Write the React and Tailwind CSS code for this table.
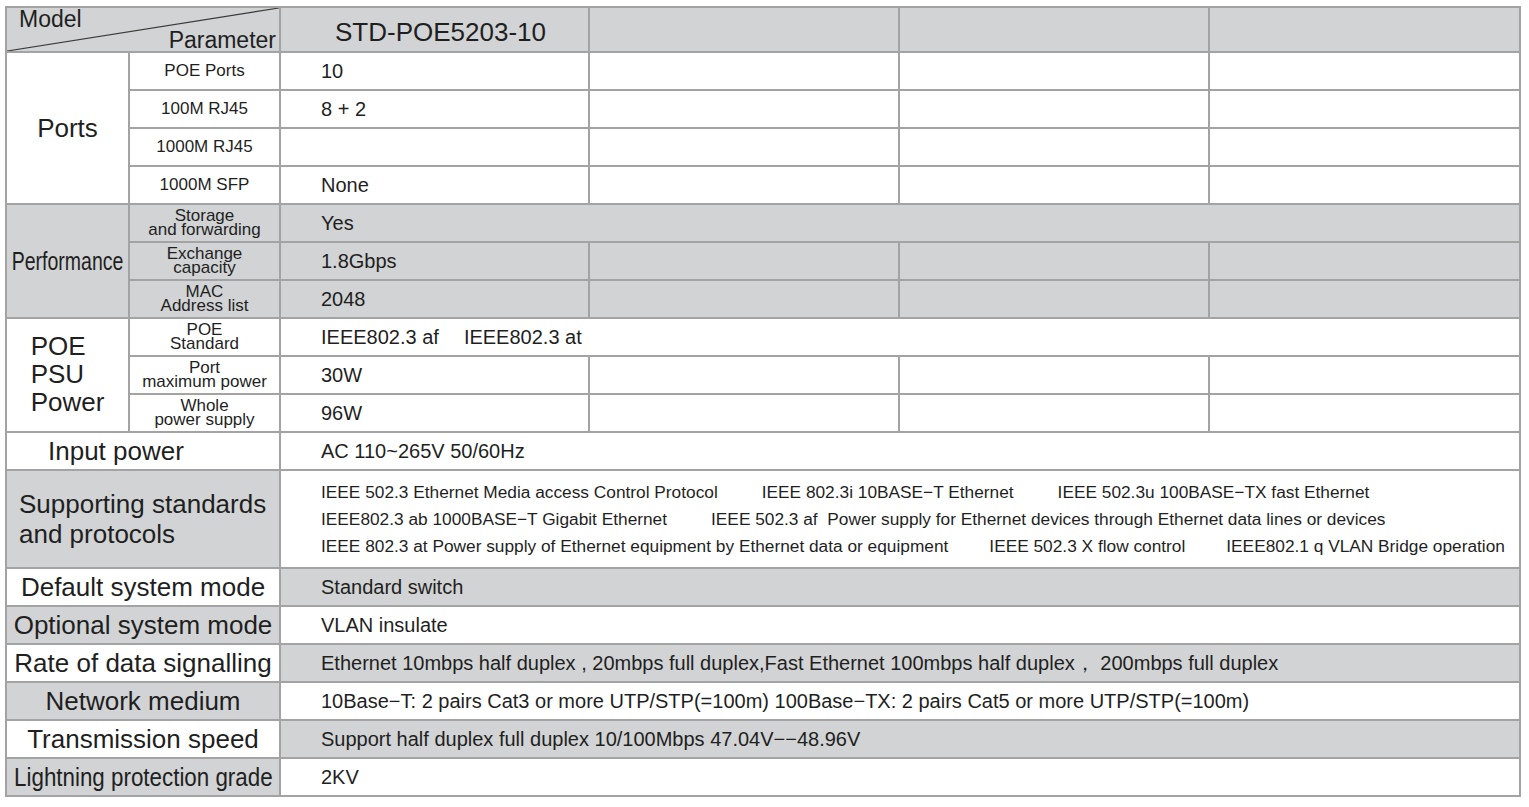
import React from 'react';

// colonnes : label groupe | sous-label | 4 colonnes de modèles
const GRAY = 'bg-[#d1d3d4]';
const cell = 'border-2 border-[#a3a3a3] p-0';

const Empty = ({ n = 3 }) =>
  Array.from({ length: n }).map((_, i) => <td key={i} className={cell}></td>);

const Sub = ({ children }) => (
  <td className={`${cell} text-center text-[17px] leading-[14px]`}>{children}</td>
);

const Val = ({ children, span = 1, className = '' }) => (
  <td colSpan={span} className={`${cell} pl-[40px] text-[20px] leading-[30px] whitespace-nowrap ${className}`}>
    {children}
  </td>
);

const standards = [
  [
    'IEEE 502.3 Ethernet Media access Control Protocol',
    'IEEE 802.3i 10BASE\u2212T Ethernet',
    'IEEE 502.3u 100BASE\u2212TX fast Ethernet',
  ],
  [
    'IEEE802.3 ab 1000BASE\u2212T Gigabit Ethernet',
    'IEEE 502.3 af  Power supply for Ethernet devices through Ethernet data lines or devices',
  ],
  [
    'IEEE 802.3 at Power supply of Ethernet equipment by Ethernet data or equipment',
    'IEEE 502.3 X flow control',
    'IEEE802.1 q VLAN Bridge operation',
  ],
];

// lignes simples du bas : [label, valeur, labelGris]
const bottomRows = [
  ['Default system mode', 'Standard switch', false],
  ['Optional system mode', 'VLAN insulate', true],
  ['Rate of data signalling', 'Ethernet 10mbps half duplex , 20mbps full duplex,Fast Ethernet 100mbps half duplex\uFF0C 200mbps full duplex', false],
  ['Network medium', '10Base\u2212T: 2 pairs Cat3 or more UTP/STP(=100m) 100Base\u2212TX: 2 pairs Cat5 or more UTP/STP(=100m)', true],
  ['Transmission speed', 'Support half duplex full duplex 10/100Mbps 47.04V\u2212\u221248.96V', false],
  ['Lightning protection grade', '2KV', true],
];

export default function App() {
  return (
    <div className="min-h-screen bg-white pt-[6px] pl-[5px] font-['Liberation_Sans',Arial,sans-serif] text-[#1f1f1f]">
      <table className="w-[1514px] table-fixed border-collapse">
        <colgroup>
          <col className="w-[123px]" />
          <col className="w-[151px]" />
          <col className="w-[309px]" />
          <col className="w-[310px]" />
          <col className="w-[310px]" />
          <col className="w-[311px]" />
        </colgroup>
        <tbody>
          {/* ========== EN-TÊTE ========== */}
          <tr className={`h-[45px] ${GRAY}`}>
            <td colSpan={2} className={`${cell} relative`}>
              <svg className="absolute inset-0 h-full w-full" preserveAspectRatio="none" viewBox="0 0 100 100">
                <line x1="0" y1="100" x2="100" y2="0" stroke="#3a3a3a" strokeWidth="1.2" vectorEffect="non-scaling-stroke" />
              </svg>
              <div className="flex flex-col text-[23px] leading-[21px]">
                <span className="self-start pl-[12px]">Model</span>
                <span className="self-end pr-[3px]">Parameter</span>
              </div>
            </td>
            <td className={`${cell} pl-[54px] pt-[4px] text-[26px] leading-[30px]`}>STD-POE5203-10</td>
            <Empty />
          </tr>

          {/* ========== PORTS ========== */}
          <tr className="h-[38px]">
            <td rowSpan={4} className={`${cell} text-center text-[26px] leading-[30px]`}>Ports</td>
            <Sub>POE Ports</Sub>
            <Val>10</Val>
            <Empty />
          </tr>
          <tr className="h-[38px]">
            <Sub>100M RJ45</Sub>
            <Val>8 + 2</Val>
            <Empty />
          </tr>
          <tr className="h-[38px]">
            <Sub>1000M RJ45</Sub>
            <Val></Val>
            <Empty />
          </tr>
          <tr className="h-[38px]">
            <Sub>1000M SFP</Sub>
            <Val>None</Val>
            <Empty />
          </tr>

          {/* ========== PERFORMANCE ========== */}
          <tr className={`h-[38px] ${GRAY}`}>
            <td rowSpan={3} className={`${cell} whitespace-nowrap`}>
              <div className="flex justify-center">
                <span className="inline-block scale-x-[0.78] text-[25px] leading-[30px]">Performance</span>
              </div>
            </td>
            <Sub>Storage<br />and forwarding</Sub>
            <Val span={4}>Yes</Val>
          </tr>
          <tr className={`h-[38px] ${GRAY}`}>
            <Sub>Exchange<br />capacity</Sub>
            <Val>1.8Gbps</Val>
            <Empty />
          </tr>
          <tr className={`h-[38px] ${GRAY}`}>
            <Sub>MAC<br />Address list</Sub>
            <Val>2048</Val>
            <Empty />
          </tr>

          {/* ========== POE ========== */}
          <tr className="h-[38px]">
            <td rowSpan={3} className={`${cell} text-center`}>
              <div className="inline-block text-left text-[26px] leading-[28px]">
                POE<br />PSU<br />Power
              </div>
            </td>
            <Sub>POE<br />Standard</Sub>
            <Val span={4}>
              <span className="mr-[25px]">IEEE802.3 af</span>
              <span>IEEE802.3 at</span>
            </Val>
          </tr>
          <tr className="h-[38px]">
            <Sub>Port<br />maximum power</Sub>
            <Val>30W</Val>
            <Empty />
          </tr>
          <tr className="h-[38px]">
            <Sub>Whole<br />power supply</Sub>
            <Val>96W</Val>
            <Empty />
          </tr>

          {/* ========== INPUT / STANDARDS ========== */}
          <tr className="h-[38px]">
            <td colSpan={2} className={`${cell} pl-[41px] text-[26px] leading-[30px]`}>Input power</td>
            <Val span={4}>AC 110~265V 50/60Hz</Val>
          </tr>
          <tr className="h-[98px]">
            <td colSpan={2} className={`${cell} ${GRAY} pl-[12px] text-[26px] leading-[30px]`}>
              Supporting standards<br />and protocols
            </td>
            <td colSpan={4} className={`${cell} pl-[40px] text-[17.3px] leading-[27px]`}>
              {standards.map((line, i) => (
                <div key={i} className={`flex whitespace-pre ${i === 2 ? 'gap-[41px]' : 'gap-[44px]'}`}>
                  {line.map((s) => (
                    <span key={s}>{s}</span>
                  ))}
                </div>
              ))}
            </td>
          </tr>

          {/* ========== LIGNES DU BAS ========== */}
          {bottomRows.map(([label, value, grayLabel]) => (
            <tr key={label} className="h-[38px]">
              <td colSpan={2} className={`${cell} whitespace-nowrap ${grayLabel ? GRAY : ''}`}>
                <div className="flex justify-center">
                  <span className={`inline-block text-[26px] leading-[30px] ${label.startsWith('Lightning') ? 'scale-x-[0.86]' : ''}`}>
                    {label}
                  </span>
                </div>
              </td>
              <Val span={4} className={grayLabel ? '' : GRAY}>{value}</Val>
            </tr>
          ))}
        </tbody>
      </table>
    </div>
  );
}
